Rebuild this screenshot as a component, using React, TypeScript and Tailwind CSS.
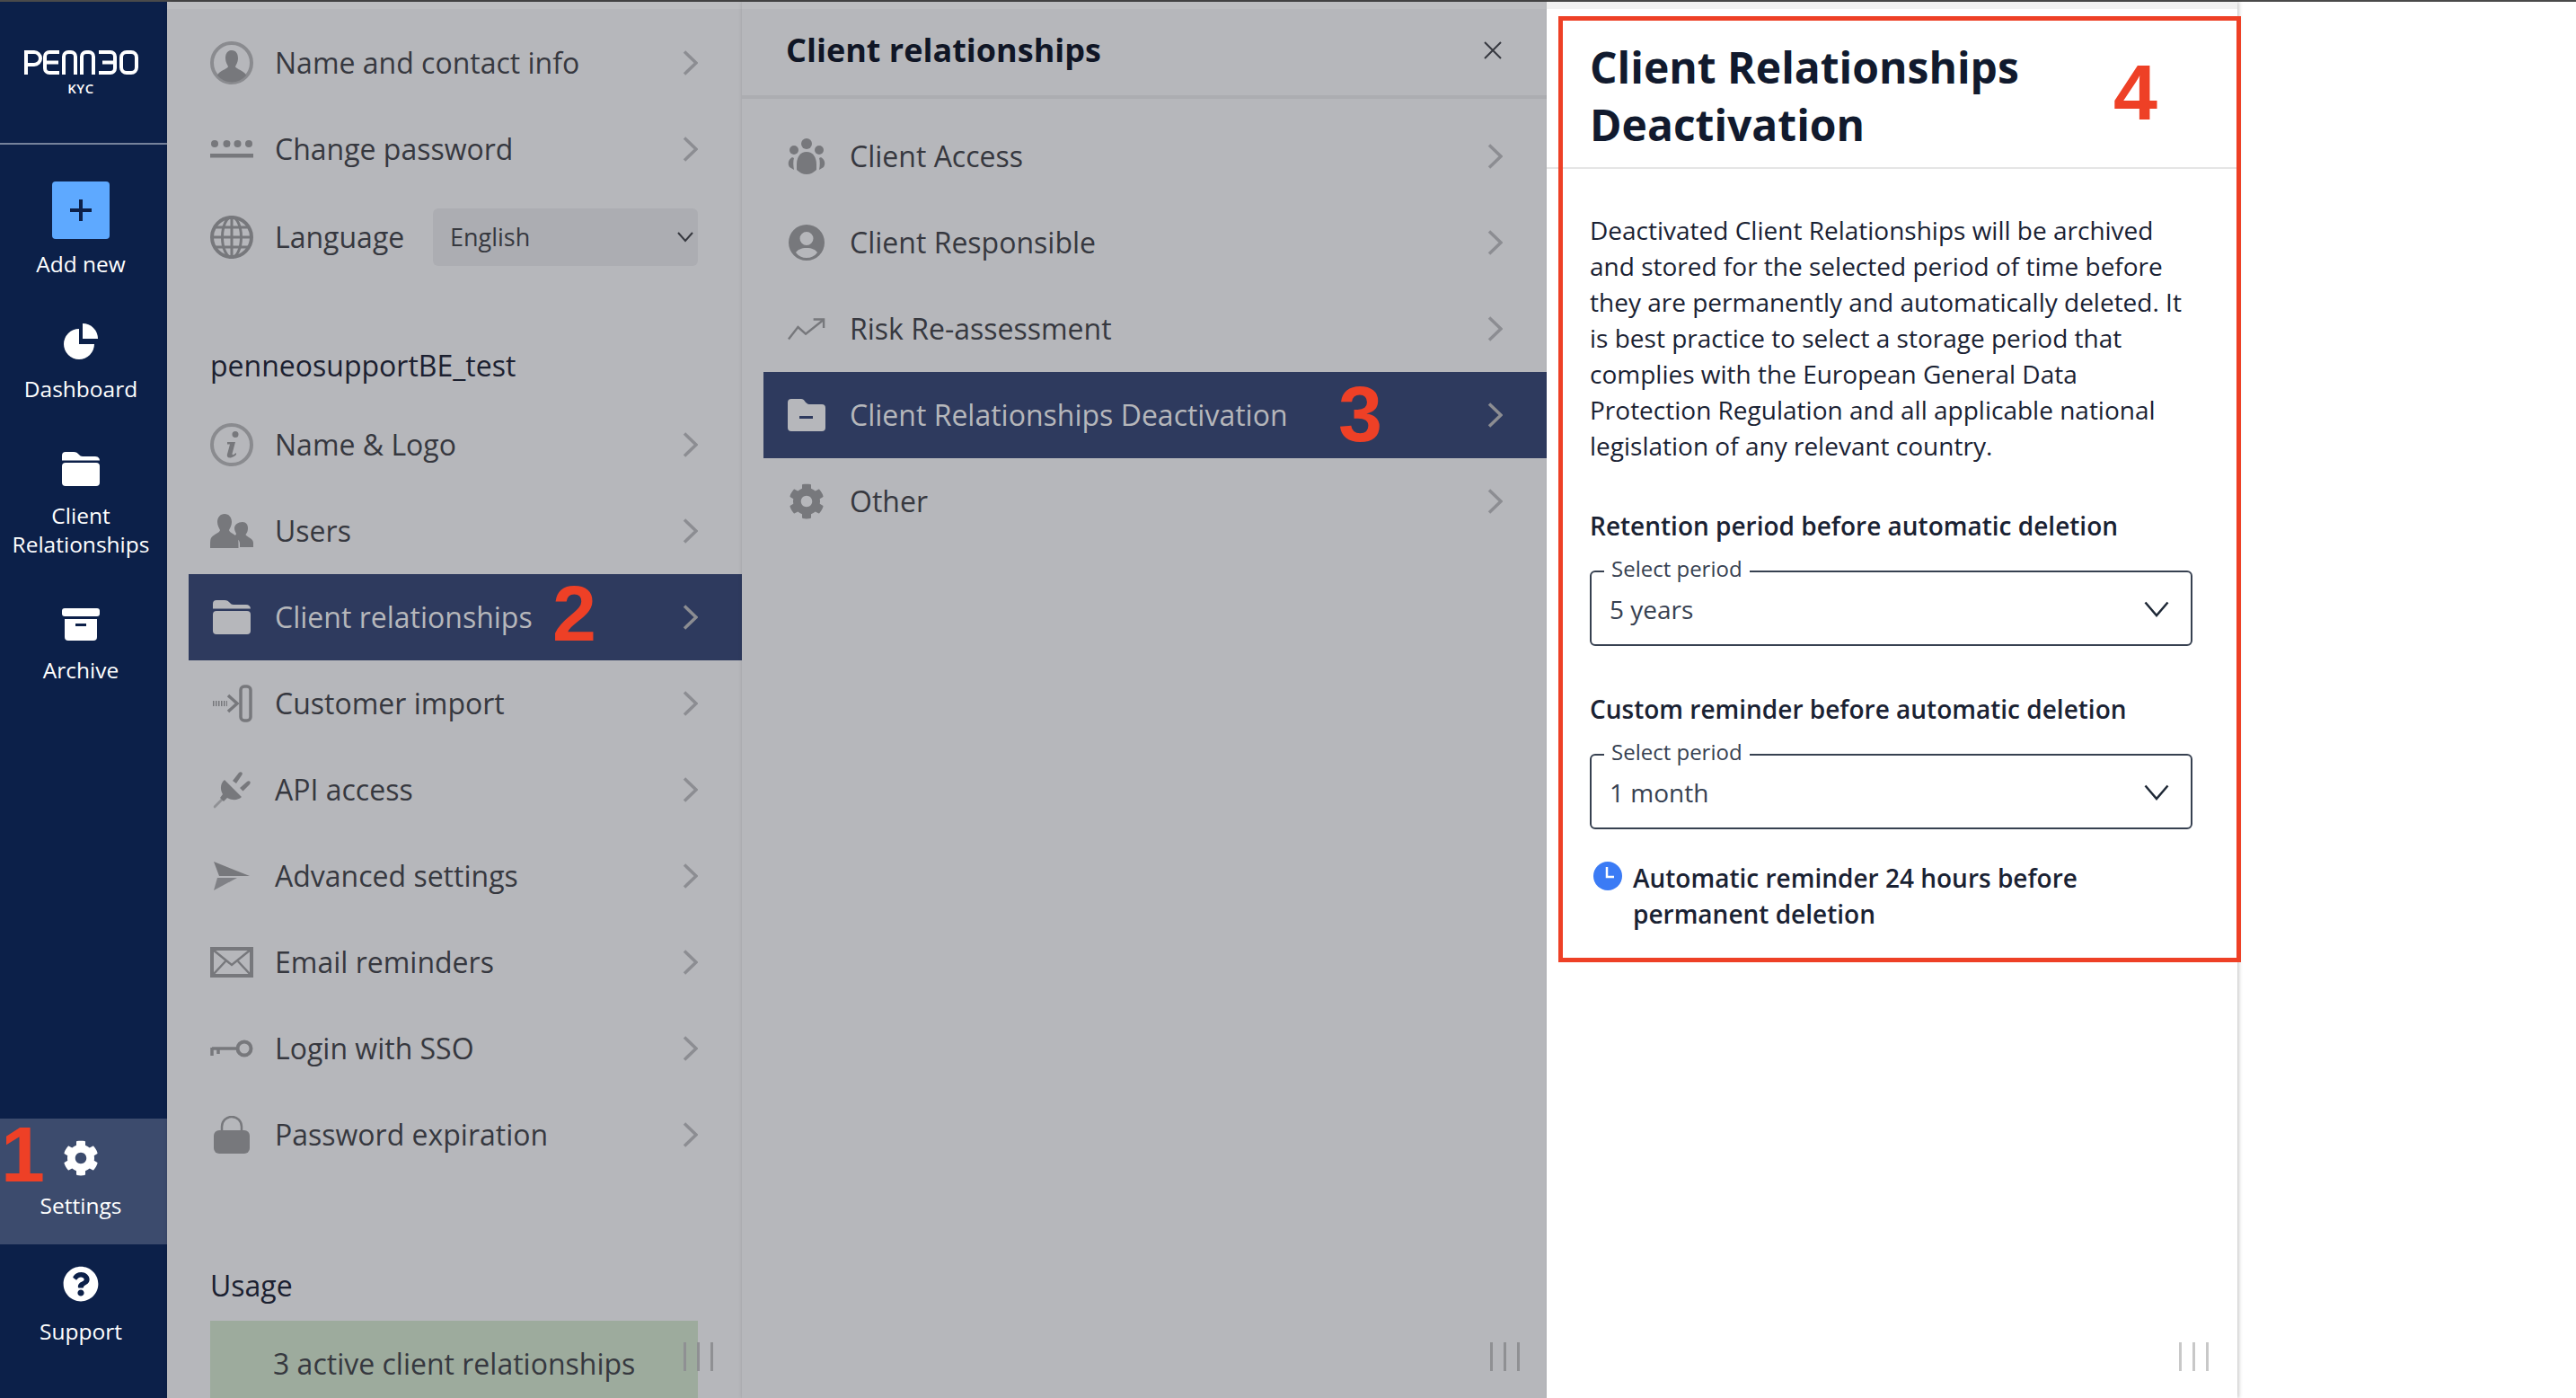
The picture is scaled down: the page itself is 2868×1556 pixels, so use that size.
import type { ReactNode } from "react";
import { FaCog, FaQuestionCircle } from "react-icons/fa";

// Penneo KYC settings, three stacked panels with the tutorial's red annotations on top.

const font = { fontFamily: '"Open Sans", "Noto Sans", sans-serif' };

function Logo() {
  return (
    <svg viewBox="0 0 127 27" className="h-[27px] w-[127px]" fill="none" stroke="white" strokeWidth="4">
      <path d="M2 27V2h9a6.5 6.5 0 0 1 0 14H2" />
      <path d="M39 2H28a5 5 0 0 0-5 5v13a5 5 0 0 0 5 5h11M23 13.5h15" />
      <path d="M44 27V7a5 5 0 0 1 5-5h3a5 5 0 0 1 5 5v20" />
      <path d="M64 27V7a5 5 0 0 1 5-5h3a5 5 0 0 1 5 5v20" />
      <path d="M83 2h13a5 5 0 0 1 5 5v13a5 5 0 0 1-5 5H83M87 13.5h14" />
      <rect x="108" y="2" width="17" height="23" rx="6" />
    </svg>
  );
}

function FolderIcon({ className }: { className?: string }) {
  return (
    <svg viewBox="0 0 42 38" className={className} fill="currentColor">
      <path d="M0 9V4a4 4 0 0 1 4-4h9c3 0 4 1 6 3 1 1 2 2 4 2h14a5 5 0 0 1 5 4.500H0z" />
      <path d="M4 12h34a4 4 0 0 1 4 4v18a4 4 0 0 1-4 4H4a4 4 0 0 1-4-4V16a4 4 0 0 1 4-4z" />
    </svg>
  );
}

function UserRingIcon() {
  return (
    <svg viewBox="0 0 48 52" className="h-[52px] w-[48px]" fill="none">
      <circle cx="24" cy="26" r="22" stroke="#8a8b8f" strokeWidth="4" />
      <path
        fill="currentColor"
        d="M24 12c5 0 7 4 7 9 0 4-2 7-3 9 0 2 7 4 10 7 1 1 2 2 2 3a21 21 0 0 1-32 0c0-1 1-2 2-3 3-3 10-5 10-7-1-2-3-5-3-9 0-5 2-9 7-9z"
      />
    </svg>
  );
}

function PasswordIcon() {
  return (
    <svg viewBox="0 0 48 20" className="h-[20px] w-[48px]" fill="currentColor">
      <circle cx="5" cy="4" r="4" />
      <circle cx="18.500" cy="4" r="4" />
      <circle cx="30.500" cy="4" r="4" />
      <circle cx="43" cy="4" r="4" />
      <rect y="15" width="48" height="4.500" />
    </svg>
  );
}

function GlobeIcon() {
  return (
    <svg viewBox="0 0 48 50" className="h-[50px] w-[48px]" fill="none" stroke="currentColor" strokeWidth="3">
      <circle cx="24" cy="25" r="22" strokeWidth="4" />
      <ellipse cx="24" cy="25" rx="10.500" ry="22.500" />
      <path d="M24 3v44M2 25h44M5 14h38M5 36h38" />
    </svg>
  );
}

function InfoIcon() {
  return (
    <svg viewBox="0 0 48 52" className="h-[52px] w-[48px]" fill="none">
      <circle cx="24" cy="26" r="22" stroke="#8a8b8f" strokeWidth="4" />
      <path
        fill="currentColor"
        d="M28 11a3.500 3.500 0 1 1-.01 7.010A3.500 3.500 0 0 1 28 11zM19 23h9l-3.500 13c0 1 .5 1.500 1.500 1l3-2v2c-2 2-5 3.500-7 3.500-3 0-3.500-2-3-4l3-11h-3z"
      />
    </svg>
  );
}

function UsersIcon() {
  return (
    <svg viewBox="0 0 48 38" className="h-[38px] w-[48px]" fill="currentColor">
      <path d="M36 9c4 0 6 3 6 7 0 3-1 5-2.500 7 0 2 8.500 4 8.500 9v5H33v-4c0-4-4-6-7-8 2-1 3-2 3-3-1-2-2-4-2-6 0-4 4-7 9-7z" />
      <path d="M16 0c5 0 8 4 8 9 0 4-2 7-3 9 0 3 9 5 10 10 .5 2 .5 5 .5 10H0c0-5 0-8 .500-10C2 23 11 21 11 18c-1-2-3-5-3-9 0-5 3-9 8-9z" />
    </svg>
  );
}

function ImportIcon() {
  return (
    <svg viewBox="0 0 46 42" className="h-[42px] w-[46px]" fill="none" stroke="currentColor">
      <path d="M2 21h16" strokeWidth="6" strokeDasharray="1.500 1.500" />
      <path d="M19 12l10 9-10 9" strokeWidth="3.500" />
      <rect x="33" y="2" width="11" height="38" rx="4" strokeWidth="3.500" />
    </svg>
  );
}

function PlugIcon() {
  return (
    <svg viewBox="0 0 42 42" className="h-[42px] w-[42px]" fill="currentColor">
      <path d="M13 10l19 19c-4 4-11 4-16 1l-4 4-4-4 3-4c-3-5-3-12 2-16z" />
      <path d="M22 11l7-9c1-1 3-1 3.500 0s.500 2-.500 3l-6 9zM30 19l8-7c1-1 3-1 3.500 0s0 2.500-1 3.500l-7 7z" />
      <path d="M1 39l9-9 2 2-9 9c-1 1-3 0-2-2z" opacity=".6" />
    </svg>
  );
}

function SendIcon() {
  return (
    <svg viewBox="0 0 40 32" className="h-[32px] w-[40px]" fill="currentColor">
      <path d="M0 0l40 16H6z" />
      <path d="M4 18h22L0 32z" opacity=".85" />
    </svg>
  );
}

function MailIcon() {
  return (
    <svg viewBox="0 0 48 34" className="h-[34px] w-[48px]" fill="none" stroke="currentColor">
      <rect x="2" y="2" width="44" height="30" strokeWidth="4" />
      <path d="M3 3l21 17L45 3M3 31l14-15M45 31L31 16" strokeWidth="2.500" />
    </svg>
  );
}

function KeyIcon() {
  return (
    <svg viewBox="0 0 48 20" className="h-[20px] w-[48px]" fill="none" stroke="currentColor">
      <circle cx="38" cy="10" r="7.500" strokeWidth="4" />
      <path d="M30 10H2" strokeWidth="3.500" />
      <path d="M2 9v9M9 9v7" strokeWidth="3.500" />
    </svg>
  );
}

function LockIcon() {
  return (
    <svg viewBox="0 0 40 42" className="h-[42px] w-[40px]" fill="none">
      <path d="M9 18v-6a11 11 0 0 1 22 0v6" stroke="currentColor" strokeWidth="2.500" />
      <rect y="16" width="40" height="26" rx="6" fill="currentColor" />
    </svg>
  );
}

function GroupIcon() {
  return (
    <svg viewBox="0 0 42 40" className="h-[40px] w-[42px]" fill="currentColor">
      <ellipse cx="21" cy="6" rx="6" ry="6" />
      <ellipse cx="7" cy="13" rx="5" ry="5" />
      <ellipse cx="35" cy="13" rx="5" ry="5" />
      <path d="M21 15c7 0 11 6 11 14v6c-3 3-7 5-11 5s-8-2-11-5v-6c0-8 4-14 11-14z" />
      <path d="M5 21l2 1c-1 3-1 8 0 13l-5-3c-2-3-2-8 3-11zM37 21l-2 1c1 3 1 8 0 13l5-3c2-3 2-8-3-11z" />
    </svg>
  );
}

function ResponsibleIcon() {
  return (
    <svg viewBox="0 0 40 40" className="h-[40px] w-[40px]" fill="currentColor">
      <path
        fillRule="evenodd"
        d="M20 0a20 20 0 1 1 0 40 20 20 0 0 1 0-40zm0 8a7.500 7.500 0 1 0 0 15 7.500 7.500 0 0 0 0-15zm0 18c-6 0-10 2-12 5 3 4 7 6 12 6s9-2 12-6c-2-3-6-5-12-5z"
      />
    </svg>
  );
}

function TrendIcon() {
  return (
    <svg viewBox="0 0 44 26" className="h-[26px] w-[42px]" fill="none" stroke="currentColor" strokeWidth="2.500">
      <path d="M1 25l11-14 9 8L41 3" />
      <path d="M30 2h12v10" />
    </svg>
  );
}

function FolderMinusIcon() {
  return (
    <svg viewBox="0 0 42 36" className="h-[36px] w-[42px]">
      <path
        fill="currentColor"
        d="M0 4a4 4 0 0 1 4-4h11c2 0 3 1 4 2.500S22 6 24 6h14a4 4 0 0 1 4 4v22a4 4 0 0 1-4 4H4a4 4 0 0 1-4-4z"
      />
      <rect x="13" y="19" width="15" height="3" fill="#2e3a5e" />
    </svg>
  );
}

function PieIcon() {
  return (
    <svg viewBox="0 0 38 40" className="h-[40px] w-[38px]" fill="white">
      <path d="M17 7a17 17 0 1 0 17 17l-17 0z" transform="translate(0 -1)" />
      <path d="M21 0a17 17 0 0 1 17 17H21z" />
    </svg>
  );
}

function ArchiveIcon() {
  return (
    <svg viewBox="0 0 42 36" className="h-[36px] w-[42px]">
      <rect width="42" height="9" rx="3" fill="white" />
      <path fill="white" d="M3 12h36v20a4 4 0 0 1-4 4H7a4 4 0 0 1-4-4z" />
      <rect x="15" y="17" width="12" height="3" fill="#0c2049" />
    </svg>
  );
}

function Chevron({ className }: { className?: string }) {
  return (
    <svg viewBox="0 0 17 28" className={`h-[28px] w-[17px] shrink-0 ${className ?? ""}`} fill="none" stroke="currentColor" strokeWidth="3.500">
      <path d="M2 1.500L15 14 2 26.500" />
    </svg>
  );
}

function Row({ icon, label, active, children }: { icon: ReactNode; label: string; active?: boolean; children?: ReactNode }) {
  return (
    <div className={`ml-[24px] flex h-[96px] items-center pl-[24px] pr-[49px] ${active ? "bg-[#2e3a5e] text-[#b6b7bb]" : "text-[#36383f]"}`}>
      <div className={`flex w-[48px] shrink-0 items-center justify-center ${active ? "text-[#b6b7bb]" : "text-[#77787c]"}`}>{icon}</div>
      <span className="ml-[24px] flex-1 text-[32px] leading-[44px]">{label}</span>
      {children ?? <Chevron className="text-[#8c8d92]" />}
    </div>
  );
}

function SubRow({ icon, label, active }: { icon: ReactNode; label: string; active?: boolean }) {
  return (
    <div className={`ml-[24px] flex h-[96px] items-center pl-[27px] pr-[49px] ${active ? "bg-[#2e3a5e] text-[#b6b7bb]" : "text-[#36383f]"}`}>
      <div className={`flex w-[42px] shrink-0 items-center justify-center ${active ? "text-[#b6b7bb]" : "text-[#77787c]"}`}>{icon}</div>
      <span className="ml-[27px] flex-1 text-[32px] leading-[44px]">{label}</span>
      <Chevron className="text-[#8c8d92]" />
    </div>
  );
}

function NavItem({ icon, label, h, active }: { icon: ReactNode; label: ReactNode; h: string; active?: boolean }) {
  return (
    <div className={`flex flex-col items-center pr-[6px] ${h} ${active ? "bg-[#3c4b6d]" : ""}`}>
      <div className="flex h-[64px] items-end">{icon}</div>
      <div className="mt-[17px] text-center text-[24.5px] font-medium leading-[32px] text-white">{label}</div>
    </div>
  );
}

function Handle({ tone, right }: { tone: string; right: string }) {
  return (
    <div className={`absolute bottom-[30px] flex h-[32px] gap-[12px] ${right}`}>
      <div className={`w-[3px] ${tone}`} />
      <div className={`w-[3px] ${tone}`} />
      <div className={`w-[3px] ${tone}`} />
    </div>
  );
}

function PeriodSelect({ value }: { value: string }) {
  return (
    <fieldset className="h-[99px] rounded-[6px] border-2 border-[#374151] pl-[20px] pr-[24px]">
      <legend className="relative top-[-3px] ml-[-6px] px-[8px] text-[24px] leading-[32px] text-[#374151]">Select period</legend>
      <div className="flex h-[52px] items-center justify-between">
        <span className="text-[28px] leading-[40px] text-[#374151]">{value}</span>
        <svg viewBox="0 0 28 18" className="h-[18px] w-[28px]" fill="none" stroke="#1f2937" strokeWidth="2.500">
          <path d="M1.500 1.500L14 16 26.500 1.500" />
        </svg>
      </div>
    </fieldset>
  );
}

const numberCls = "absolute z-20 text-[88px] font-bold leading-none text-[#ee4026]";
const numberFont = { fontFamily: '"Liberation Sans", sans-serif' };

export default function App() {
  return (
    <div className="relative flex h-[1556px] w-[2868px] flex-col overflow-hidden bg-white" style={font}>
      <div className="h-[2px] shrink-0 bg-[#4a4a4a]" />
      <div className="flex min-h-0 flex-1">
        <aside className="flex w-[186px] shrink-0 flex-col bg-[#0c2049]">
          <div className="flex h-[159px] shrink-0 flex-col items-center border-b-2 border-[#76829b] pr-[6px] pt-[54px]">
            <Logo />
            <span className="mt-[8px] text-[15px] font-semibold leading-[15px] tracking-[0.5px] text-white">KYC</span>
          </div>
          <div className="mt-[41px] flex flex-col items-center pr-[6px]">
            <div className="flex h-[64px] w-[64px] items-center justify-center rounded-[4px] bg-[#5ea9ff]">
              <svg viewBox="0 0 24 24" className="h-[24px] w-[24px]" fill="none" stroke="#0c2049" strokeWidth="4">
                <path d="M12 0v24M0 12h24" />
              </svg>
            </div>
            <div className="mt-[12px] text-[24.5px] font-medium leading-[32px] text-white">Add new</div>
          </div>
          <div className="mt-[26px]" />
          <NavItem h="h-[141px]" icon={<PieIcon />} label="Dashboard" />
          <NavItem h="h-[172px]" icon={<FolderIcon className="h-[38px] w-[42px] text-white" />} label={<>Client<br />Relationships</>} />
          <NavItem h="h-[140px]" icon={<ArchiveIcon />} label="Archive" />
          <div className="mt-auto pb-[31px]">
            <NavItem h="h-[140px]" active icon={<FaCog className="text-[40px] text-white" />} label="Settings" />
            <NavItem h="h-[140px]" icon={<FaQuestionCircle className="text-[40px] text-white" />} label="Support" />
          </div>
        </aside>

        <section className="relative z-[1] flex w-[640px] shrink-0 flex-col bg-[#b6b7bb] shadow-[2px_0_5px_rgba(0,0,0,0.35)]">
          <div className="h-[8px] shrink-0 bg-[#bcbdc0]" />
          <div className="mt-[12px]">
            <Row icon={<UserRingIcon />} label="Name and contact info" />
            <Row icon={<PasswordIcon />} label="Change password" />
            <div className="h-[2px]" />
            <Row icon={<GlobeIcon />} label="Language">
              <div className="flex h-[64px] w-[295px] shrink-0 items-center justify-between rounded-[6px] bg-[#acadb2] pl-[19px] pr-[5px]">
                <span className="text-[27px] text-[#36383f]">English</span>
                <svg viewBox="0 0 18 12" className="h-[12px] w-[18px]" fill="none" stroke="#36383f" strokeWidth="2">
                  <path d="M1 1l8 9 8-9" />
                </svg>
              </div>
            </Row>
          </div>
          <h2 className="ml-[48px] mt-[73px] text-[32px] leading-[44px] text-[#1b2030]">penneosupportBE_test</h2>
          <div className="mt-[18px]">
            <Row icon={<InfoIcon />} label="Name & Logo" />
            <Row icon={<UsersIcon />} label="Users" />
            <Row active icon={<FolderIcon className="h-[38px] w-[42px]" />} label="Client relationships" />
            <Row icon={<ImportIcon />} label="Customer import" />
            <Row icon={<PlugIcon />} label="API access" />
            <Row icon={<SendIcon />} label="Advanced settings" />
            <Row icon={<MailIcon />} label="Email reminders" />
            <Row icon={<KeyIcon />} label="Login with SSO" />
            <Row icon={<LockIcon />} label="Password expiration" />
          </div>
          <h2 className="ml-[48px] mt-[98px] text-[32px] leading-[44px] text-[#1b2030]">Usage</h2>
          <div className="ml-[48px] mt-[17px] flex h-[98px] w-[543px] items-center bg-[#9dab9d] pl-[70px] pt-[10px] text-[32px] text-[#36383f]">
            3 active client relationships
          </div>
          <Handle tone="bg-[#8f9093]" right="right-[32px]" />
        </section>

        <section className="relative z-[1] flex w-[896px] shrink-0 flex-col bg-[#b6b7bb] shadow-[2px_0_5px_rgba(0,0,0,0.35)]">
          <div className="h-[8px] shrink-0 bg-[#bcbdc0]" />
          <header className="flex h-[100px] shrink-0 items-center justify-between border-b-4 border-[#acadb1] pb-[5px] pl-[49px] pr-[50px]">
            <h1 className="text-[36px] font-bold leading-[48px] text-[#101626]">Client relationships</h1>
            <svg viewBox="0 0 20 20" className="h-[20px] w-[20px]" fill="none" stroke="#36383f" strokeWidth="2">
              <path d="M1 1l18 18M19 1L1 19" />
            </svg>
          </header>
          <div className="mt-[16px]">
            <SubRow icon={<GroupIcon />} label="Client Access" />
            <SubRow icon={<ResponsibleIcon />} label="Client Responsible" />
            <SubRow icon={<TrendIcon />} label="Risk Re-assessment" />
            <SubRow active icon={<FolderMinusIcon />} label="Client Relationships Deactivation" />
            <SubRow icon={<FaCog className="text-[40px]" />} label="Other" />
          </div>
          <Handle tone="bg-[#8f9093]" right="right-[30px]" />
        </section>

        <section className="relative z-[1] flex w-[769px] shrink-0 flex-col bg-white shadow-[2px_0_4px_rgba(0,0,0,0.2)]">
          <div className="h-[8px] shrink-0 bg-[#f1f1f1]" />
          <header className="h-[178px] shrink-0 border-b-2 border-[#e5e5e5] pl-[48px] pr-[200px] pt-[33px]">
            <h1 className="text-[48px] font-bold leading-[64px] text-[#111a2e]">Client Relationships Deactivation</h1>
          </header>
          <div className="px-[48px] pr-[50px] pt-[48px] text-[#1a2233]">
            <p className="text-[28px] leading-[40px]">
              Deactivated Client Relationships will be archived and stored for the selected period of time before they
              are permanently and automatically deleted. It is best practice to select a storage period that complies
              with the European General Data Protection Regulation and all applicable national legislation of any
              relevant country.
            </p>
            <h3 className="mt-[49px] text-[28px] font-semibold leading-[40px]">Retention period before automatic deletion</h3>
            <div className="mt-[15px]">
              <PeriodSelect value="5 years" />
            </div>
            <h3 className="mt-[50px] text-[28px] font-semibold leading-[40px]">Custom reminder before automatic deletion</h3>
            <div className="mt-[15px]">
              <PeriodSelect value="1 month" />
            </div>
            <div className="mt-[34px] flex items-start">
              <svg viewBox="0 0 32 32" className="ml-[4px] mt-[2px] h-[32px] w-[32px] shrink-0">
                <circle cx="16" cy="16" r="16" fill="#3b7bf5" />
                <path d="M15 6v11h8" fill="none" stroke="white" strokeWidth="2.500" />
              </svg>
              <p className="ml-[12px] text-[28px] font-semibold leading-[40px]">Automatic reminder 24 hours before permanent deletion</p>
            </div>
          </div>
          <Handle tone="bg-[#c8c8c8]" right="right-[32px]" />
        </section>
      </div>

      <div className="absolute left-[1735px] top-[18px] z-20 h-[1053px] w-[760px] border-[5px] border-[#ee4026]" />
      <span className={`${numberCls} left-[1px] top-[1241px]`} style={numberFont}>1</span>
      <span className={`${numberCls} left-[615px] top-[639px]`} style={numberFont}>2</span>
      <span className={`${numberCls} left-[1490px] top-[417px]`} style={numberFont}>3</span>
      <span className={`${numberCls} left-[2353px] top-[59px]`} style={numberFont}>4</span>
    </div>
  );
}
